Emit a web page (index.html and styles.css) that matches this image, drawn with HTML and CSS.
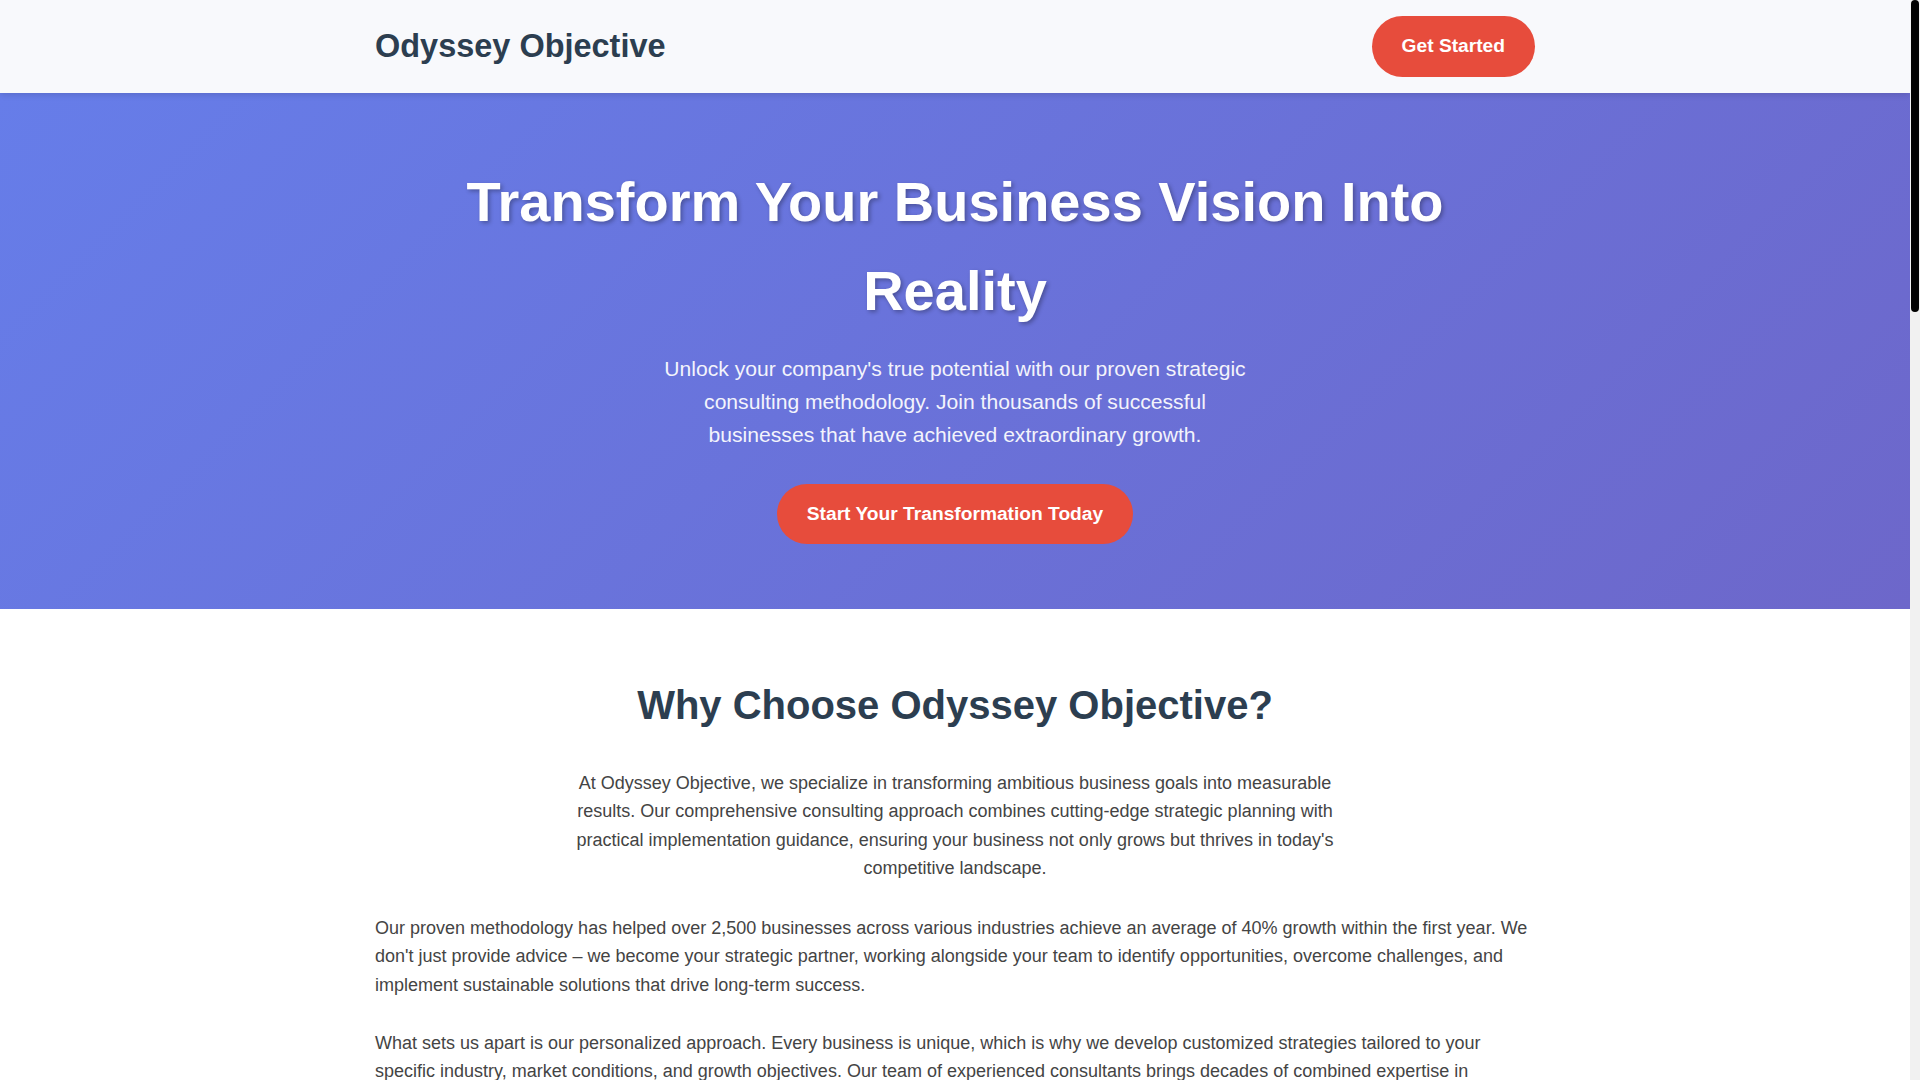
FILE: index.html
```html
<!DOCTYPE html>
<html lang="en">
<head>
<meta charset="UTF-8">
<title>Odyssey Objective - Strategic Business Consulting</title>
<link rel="stylesheet" href="styles.css">
</head>
<body>
<div class="scroll-thumb" aria-hidden="true"></div>
<header class="site-header">
  <div class="container nav-row">
    <div class="logo">Odyssey Objective</div>
    <a href="#" class="btn btn-nav">Get Started</a>
  </div>
</header>

<section class="hero">
  <div class="container">
    <h1 class="hero-title">Transform Your Business Vision Into Reality</h1>
    <p class="hero-text">Unlock your company's true potential with our proven strategic consulting methodology. Join thousands of successful businesses that have achieved extraordinary growth.</p>
    <a href="#" class="btn btn-cta">Start Your Transformation Today</a>
  </div>
</section>

<section class="about">
  <div class="container">
    <h2 class="section-title">Why Choose Odyssey Objective?</h2>
    <p class="intro">At Odyssey Objective, we specialize in transforming ambitious business goals into measurable results. Our comprehensive consulting approach combines cutting-edge strategic planning with practical implementation guidance, ensuring your business not only grows but thrives in today's competitive landscape.</p>
    <p class="body-text">Our proven methodology has helped over 2,500 businesses across various industries achieve an average of 40% growth within the first year. We don't just provide advice – we become your strategic partner, working alongside your team to identify opportunities, overcome challenges, and implement sustainable solutions that drive long-term success.</p>
    <p class="body-text">What sets us apart is our personalized approach. Every business is unique, which is why we develop customized strategies tailored to your specific industry, market conditions, and growth objectives. Our team of experienced consultants brings decades of combined expertise in strategic planning, operations, marketing, finance, and organizational development to every engagement.</p>
    <p class="body-text">From startups looking to establish a strong foundation to established enterprises seeking to reinvent themselves, we provide the clarity, direction, and accountability you need to reach your most ambitious objectives.</p>
  </div>
</section>

<section class="services">
  <div class="container">
    <h2 class="section-title">Our Services</h2>
    <div class="service-grid">
      <div class="card">
        <h3>Strategic Planning</h3>
        <p>Develop a clear roadmap for growth with comprehensive market analysis, competitive positioning, and actionable goals aligned with your vision.</p>
      </div>
      <div class="card">
        <h3>Operational Excellence</h3>
        <p>Streamline your processes, reduce costs, and improve efficiency with proven frameworks that scale as your business grows.</p>
      </div>
      <div class="card">
        <h3>Market Expansion</h3>
        <p>Identify and capture new opportunities with data-driven strategies for entering new markets and reaching new customers.</p>
      </div>
      <div class="card">
        <h3>Financial Optimization</h3>
        <p>Strengthen your financial foundation with expert guidance on budgeting, forecasting, funding, and profitability improvement.</p>
      </div>
      <div class="card">
        <h3>Leadership Development</h3>
        <p>Build high-performing teams and empower your leaders with coaching programs designed to drive accountability and results.</p>
      </div>
      <div class="card">
        <h3>Digital Transformation</h3>
        <p>Leverage modern technology to modernize operations, enhance customer experiences, and unlock new revenue streams.</p>
      </div>
    </div>
  </div>
</section>

<section class="stats">
  <div class="container stat-row">
    <div class="stat"><div class="stat-num">2,500+</div><div class="stat-label">Businesses Transformed</div></div>
    <div class="stat"><div class="stat-num">40%</div><div class="stat-label">Average Growth</div></div>
    <div class="stat"><div class="stat-num">15+</div><div class="stat-label">Years of Experience</div></div>
    <div class="stat"><div class="stat-num">98%</div><div class="stat-label">Client Satisfaction</div></div>
  </div>
</section>

<section class="testimonials">
  <div class="container">
    <h2 class="section-title">What Our Clients Say</h2>
    <div class="quote-grid">
      <div class="quote">
        <p>"Odyssey Objective helped us double our revenue in just 18 months. Their strategic insight and hands-on support were invaluable."</p>
        <div class="quote-author">Sarah Mitchell, CEO of BrightPath Solutions</div>
      </div>
      <div class="quote">
        <p>"The team understood our challenges from day one and delivered a plan that actually worked. We couldn't be happier with the results."</p>
        <div class="quote-author">David Chen, Founder of Northwind Logistics</div>
      </div>
      <div class="quote">
        <p>"Working with Odyssey Objective transformed the way we operate. Our team is more focused, efficient, and aligned than ever."</p>
        <div class="quote-author">Maria Lopez, COO of Summit Health Group</div>
      </div>
    </div>
  </div>
</section>

<section class="closing">
  <div class="container">
    <h2 class="closing-title">Ready to Begin Your Journey?</h2>
    <p class="closing-text">Schedule a free consultation with one of our strategic advisors and discover how we can help your business reach its full potential.</p>
    <a href="#" class="btn btn-cta">Book Your Free Consultation</a>
  </div>
</section>

<footer class="site-footer">
  <div class="container footer-grid">
    <div>
      <div class="footer-logo">Odyssey Objective</div>
      <p>Strategic consulting for businesses ready to grow, adapt, and lead in a changing world.</p>
    </div>
    <div>
      <h4>Company</h4>
      <ul><li>About Us</li><li>Our Team</li><li>Careers</li><li>Contact</li></ul>
    </div>
    <div>
      <h4>Services</h4>
      <ul><li>Strategic Planning</li><li>Operations</li><li>Market Expansion</li><li>Leadership</li></ul>
    </div>
    <div>
      <h4>Contact</h4>
      <ul><li>hello@odysseyobjective.com</li><li>+1 (555) 123-4567</li><li>New York, NY</li></ul>
    </div>
  </div>
  <div class="container footer-bottom">© 2024 Odyssey Objective. All rights reserved.</div>
</footer>
</body>
</html>
```

FILE: styles.css
```css
* {
  box-sizing: border-box;
}

html {
  margin: 0;
  padding: 0;
  background: #f1f1f1;
}

body {
  margin: 0 10px 0 0;
  padding: 0;
  font-family: "Liberation Sans", Arial, sans-serif;
  line-height: 1.6;
  color: #333;
  background: #fff;
}

/* emulated page scrollbar thumb (reference shows one at the right edge) */
.scroll-thumb {
  position: fixed;
  top: 0;
  right: 1px;
  width: 8px;
  height: 312px;
  background: #000;
  border-radius: 4px;
  z-index: 100;
}

.container {
  max-width: 1200px;
  margin: 0 auto;
  padding: 0 20px;
}

/* Header */
.site-header {
  background: #f8f9fc;
  padding: 1rem 0;
  box-shadow: 0 2px 6px rgba(0, 0, 0, 0.12);
  position: relative;
  z-index: 10;
}

.nav-row {
  display: flex;
  justify-content: space-between;
  align-items: center;
}

.logo {
  font-size: 2.03rem;
  font-weight: bold;
  color: #2c3e50;
  line-height: 1.4;
}

.btn {
  display: inline-block;
  background: #e74c3c;
  color: #fff;
  text-decoration: none;
  font-weight: bold;
  font-size: 1.2rem;
  border-radius: 50px;
}

.btn-nav {
  padding: 15px 30px;
}

.btn-cta {
  padding: 14.3px 30px;
}

/* Hero */
.hero {
  background: linear-gradient(135deg, #667de9 0%, #6d67ca 100%);
  color: #fff;
  text-align: center;
  padding: 64px 0 65.5px;
}

.hero-title {
  font-size: 3.5rem;
  font-weight: bold;
  margin: 0 0 1rem;
  text-shadow: 2px 2px 4px rgba(0, 0, 0, 0.3);
}

.hero-text {
  font-size: 1.32rem;
  line-height: 1.565;
  max-width: 600px;
  margin: 0 auto 33.2px;
  opacity: 0.92;
}

/* About */
.about {
  padding: 4rem 0;
}

.section-title {
  font-size: 2.5rem;
  text-align: center;
  color: #2c3e50;
  margin: 0 0 2rem;
}

.intro {
  max-width: 800px;
  margin: 0 auto 2rem;
  text-align: center;
  font-size: 1.125rem;
  line-height: 1.57;
  color: #444;
}

.body-text {
  font-size: 1.125rem;
  line-height: 1.57;
  color: #444;
  margin: 0 0 1.9rem;
}

/* Services */
.services {
  background: #f8f9fc;
  padding: 4rem 0;
}

.service-grid {
  display: grid;
  grid-template-columns: repeat(3, 1fr);
  gap: 2rem;
}

.card {
  background: #fff;
  border-radius: 12px;
  padding: 2.5rem 2rem;
  box-shadow: 0 4px 16px rgba(0, 0, 0, 0.08);
  min-height: 260px;
}

.card h3 {
  font-size: 1.4rem;
  color: #2c3e50;
  margin: 0 0 1rem;
}

.card p {
  margin: 0;
  color: #555;
  font-size: 1.05rem;
}

/* Stats */
.stats {
  background: linear-gradient(135deg, #667eea 0%, #764ba2 100%);
  color: #fff;
  padding: 4rem 0;
}

.stat-row {
  display: grid;
  grid-template-columns: repeat(4, 1fr);
  gap: 2rem;
  text-align: center;
}

.stat-num {
  font-size: 3rem;
  font-weight: bold;
}

.stat-label {
  font-size: 1.1rem;
  opacity: 0.9;
}

/* Testimonials */
.testimonials {
  padding: 4rem 0;
}

.quote-grid {
  display: grid;
  grid-template-columns: repeat(3, 1fr);
  gap: 2rem;
}

.quote {
  background: #f8f9fc;
  border-left: 4px solid #e74c3c;
  border-radius: 8px;
  padding: 2rem;
  min-height: 240px;
}

.quote p {
  font-size: 1.1rem;
  font-style: italic;
  color: #444;
  margin: 0 0 1.5rem;
}

.quote-author {
  font-weight: bold;
  color: #2c3e50;
}

/* Closing CTA */
.closing {
  background: #2c3e50;
  color: #fff;
  text-align: center;
  padding: 5rem 0;
}

.closing-title {
  font-size: 2.5rem;
  margin: 0 0 1rem;
}

.closing-text {
  font-size: 1.2rem;
  max-width: 640px;
  margin: 0 auto 2rem;
  opacity: 0.9;
}

/* Footer */
.site-footer {
  background: #1f2d3a;
  color: #c8d0d8;
  padding: 4rem 0 2rem;
}

.footer-grid {
  display: grid;
  grid-template-columns: 2fr 1fr 1fr 1.3fr;
  gap: 2rem;
}

.footer-logo {
  font-size: 1.6rem;
  font-weight: bold;
  color: #fff;
  margin-bottom: 1rem;
}

.site-footer h4 {
  color: #fff;
  font-size: 1.1rem;
  margin: 0 0 1rem;
}

.site-footer ul {
  list-style: none;
  margin: 0;
  padding: 0;
}

.site-footer li {
  margin-bottom: 0.5rem;
}

.footer-bottom {
  margin-top: 3rem;
  padding-top: 2rem;
  border-top: 1px solid rgba(255, 255, 255, 0.15);
  text-align: center;
  font-size: 0.95rem;
}
```
